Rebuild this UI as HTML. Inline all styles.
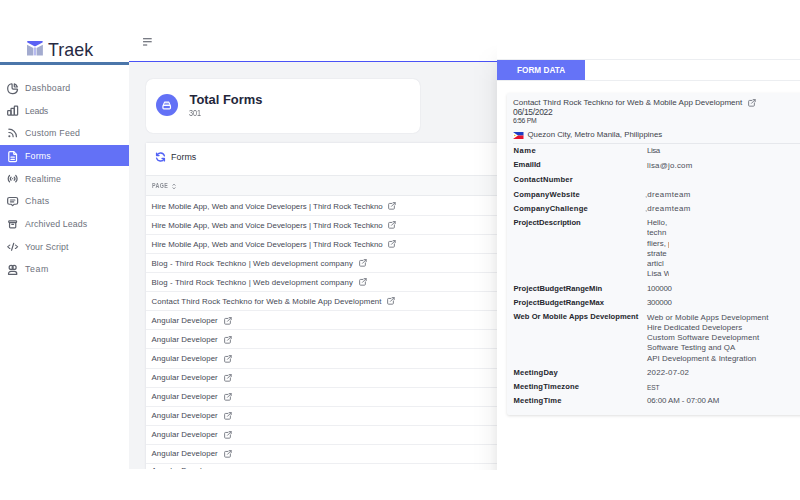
<!DOCTYPE html>
<html><head><meta charset="utf-8">
<style>
*{margin:0;padding:0;box-sizing:border-box}
html,body{width:800px;height:500px;overflow:hidden;background:#fff;font-family:"Liberation Sans",sans-serif}
.abs{position:absolute}
#side{position:absolute;left:0;top:0;width:130px;height:500px;background:#fff}
.logo-t{position:absolute;left:48px;top:38.8px;font-size:17.8px;line-height:22px;color:#272a43;letter-spacing:0}
.sline{position:absolute;left:0;top:62px;width:129px;height:2.6px;background:#4b76aa}
.nav{position:absolute;left:0;width:129px;height:16px;font-size:8.8px;line-height:16px;color:#6d717c}
.nav .t{position:absolute;left:25px;top:0;white-space:nowrap}
.nav .ic{position:absolute;left:6.1px;top:1.7px;width:13.3px;height:13.3px}
.nav .ic svg{display:block}
.actbg{position:absolute;left:0;top:145px;width:129px;height:21px;background:#6371f6}
.nav.act{color:#fff}
#hdr{position:absolute;left:130px;top:0;width:670px;height:61px;background:#fff}
.bline{position:absolute;left:129px;top:60.5px;width:370px;height:1.6px;background:#4a52f6}
#main{position:absolute;left:129px;top:62px;width:370px;height:407.4px;background:#f3f4f6;overflow:hidden}
.card1{position:absolute;left:16.5px;top:16.8px;width:274.5px;height:54.4px;background:#fff;border-radius:7px;box-shadow:0 0 1.5px rgba(40,50,80,.14)}
.circ{position:absolute;left:10.4px;top:15.6px;width:22px;height:22px;border-radius:50%;background:#6371f6}
.circ svg{position:absolute;left:6.4px;top:6.8px}
.tf{position:absolute;left:44px;top:13.2px;font-size:12.9px;line-height:16px;font-weight:bold;color:#23263a}
.n301{position:absolute;left:43.5px;top:29.2px;font-size:9.1px;line-height:10px;color:#6f727a;transform:scaleX(.8);transform-origin:0 0}
.card2{position:absolute;left:16.5px;top:81px;width:400px;height:340px;background:#fff;box-shadow:0 -.5px 2px rgba(40,50,80,.12)}
.c2h{position:absolute;left:0;top:0;width:100%;height:32px}
.c2h .t{position:absolute;left:25.5px;top:9.2px;font-size:8.9px;line-height:10px;color:#2b2f3a}
.c2h svg{position:absolute;left:9.5px;top:8.5px}
.th{position:absolute;left:0;top:32.25px;width:100%;height:21px;background:#f8f9fa;border-top:1px solid #e9ebee;border-bottom:1px solid #e9ebee}
.th .t{position:absolute;left:6.5px;top:5.3px;font-size:6.8px;line-height:8px;color:#8a8e95;font-weight:bold;letter-spacing:.45px;transform:scaleX(.78);transform-origin:0 0}
.th svg{position:absolute;left:26.5px;top:7px}
.row{position:absolute;left:0;width:100%;height:19px;border-bottom:1px solid #eeeff2}
.row .t{position:absolute;left:6px;top:4.5px;font-size:7.85px;line-height:10px;color:#454854;white-space:nowrap}
.row .ext{position:absolute;top:4.1px;width:11px;height:11px}
.row .ext svg{display:block}
#panel{position:absolute;left:497px;top:59px;width:303px;height:411px;background:#fff}
.tabbar{position:absolute;left:0;top:0;width:303px;height:22px;border-top:1px solid #eceef1;border-bottom:1px solid #eceef1}
.tab{position:absolute;left:0;top:-.5px;width:88.2px;height:20.6px;background:#6573f7;color:#fff;font-weight:bold;font-size:8.2px;text-align:center;line-height:22px}
.card3{position:absolute;left:10px;top:33.5px;width:300px;height:322.5px;background:#f8f9fb;box-shadow:0 1px 3px rgba(0,0,0,.13);border-radius:2px}
.c3t{position:absolute;left:6px;top:5.4px;font-size:8px;line-height:10px;color:#3c3f49;white-space:nowrap}
.c3d{position:absolute;left:6px;top:14.45px;font-size:8.5px;line-height:10px;color:#3c3f49}
.c3h{position:absolute;left:6px;top:24.7px;font-size:6.8px;line-height:7px;color:#3c3f49}
.flag{position:absolute;left:6.1px;top:39.25px}
.c3l{position:absolute;left:20.5px;top:37.7px;font-size:7.85px;line-height:10px;color:#3c3f49;white-space:nowrap}
.sep{position:absolute;left:6px;top:50.5px;width:300px;height:1px;background:#e6e8ec}
.lab{position:absolute;left:6.5px;font-size:7.6px;line-height:9px;font-weight:bold;color:#24262d;white-space:nowrap}
.val{position:absolute;left:140px;font-size:7.9px;line-height:10.3px;color:#4b4e58;white-space:nowrap}
.val.clip{width:21.5px;overflow:hidden}
.est{font-size:6.6px;letter-spacing:-.1px}

.pshadow{position:absolute;left:471px;top:44px;width:26px;height:426px;background:linear-gradient(90deg,rgba(0,0,0,0) 0%,rgba(0,0,0,.008) 40%,rgba(0,0,0,.028) 75%,rgba(0,0,0,.065) 100%);-webkit-mask-image:linear-gradient(180deg,transparent 0,rgba(0,0,0,.35) 16px,#000 40px)}

</style></head><body>
<div id="side">
  <svg class="abs" style="left:27px;top:41.3px" width="15.9" height="14.4" viewBox="0 0 15.9 14.4">
    <path d="M.9 0H15C15.8 0 16.1 .9 15.5 1.4L8.9 5.1Q7.95 5.6 7 5.1L.4 1.4C-.2.9.1 0 .9 0Z" fill="#5b61f4"/>
    <path d="M0 3.7L6.3 6.9V14.4H0Z" fill="#a3abcf"/>
    <path d="M15.9 3.7L9.6 6.9V14.4H15.9Z" fill="#a3abcf"/>
    <path d="M6.8 6.5H9.1V14.4H6.8Z" fill="#b7baf0"/>
  </svg>
  <div class="logo-t"><span id="logo" style="letter-spacing:0.059px">Traek</span></div>
  <div class="sline"></div>
  <div class="actbg"></div>
<div class="nav" style="top:80.0px"><span class="ic"><svg width="13.3" height="13.3" viewBox="0 0 24 24" fill="none" stroke="#5d616c" stroke-width="2.2" stroke-linecap="round" stroke-linejoin="round"><path d="M10 3.2a9 9 0 1 0 10.8 10.8a1 1 0 0 0 -1 -1h-6.8a2 2 0 0 1 -2 -2v-7a.9 .9 0 0 0 -1 -.8"/><path d="M15 3.5a9 9 0 0 1 5.5 5.5h-4.5a1 1 0 0 1 -1 -1v-4.5"/></svg></span><span class="t"><span id="n0" style="letter-spacing:0.277px">Dashboard</span></span></div>
<div class="nav" style="top:102.6px"><span class="ic"><svg width="13.3" height="13.3" viewBox="0 0 24 24" fill="none" stroke="#5d616c" stroke-width="2.2" stroke-linecap="round" stroke-linejoin="round"><path d="M3 13a1 1 0 0 1 1 -1h4a1 1 0 0 1 1 1v6a1 1 0 0 1 -1 1h-4a1 1 0 0 1 -1 -1z"/><path d="M9 9a1 1 0 0 1 1 -1h4a1 1 0 0 1 1 1v10a1 1 0 0 1 -1 1h-4a1 1 0 0 1 -1 -1z"/><path d="M15 5a1 1 0 0 1 1 -1h4a1 1 0 0 1 1 1v14a1 1 0 0 1 -1 1h-4a1 1 0 0 1 -1 -1z"/></svg></span><span class="t"><span id="n1" style="letter-spacing:-0.176px">Leads</span></span></div>
<div class="nav" style="top:125.3px"><span class="ic"><svg width="13.3" height="13.3" viewBox="0 0 24 24" fill="none" stroke="#5d616c" stroke-width="2.2" stroke-linecap="round" stroke-linejoin="round"><g transform="translate(12 10.8) scale(.85) translate(-12 -12)" stroke-width="2.6"><path d="M4 19a1 1 0 1 0 2 0a1 1 0 1 0 -2 0"/><path d="M4 4a16 16 0 0 1 16 16"/><path d="M4 11a9 9 0 0 1 9 9"/></g></svg></span><span class="t"><span id="n2" style="letter-spacing:0.220px">Custom Feed</span></span></div>
<div class="nav act" style="top:147.9px"><span class="ic"><svg width="13.3" height="13.3" viewBox="0 0 24 24" fill="none" stroke="#fff" stroke-width="2.2" stroke-linecap="round" stroke-linejoin="round"><path d="M14 3v4a1 1 0 0 0 1 1h4"/><path d="M17 21h-10a2 2 0 0 1 -2 -2v-14a2 2 0 0 1 2 -2h7l5 5v11a2 2 0 0 1 -2 2z"/><path d="M9 13l6 0"/><path d="M9 17l6 0"/></svg></span><span class="t"><span id="n3" style="letter-spacing:0.211px">Forms</span></span></div>
<div class="nav" style="top:170.6px"><span class="ic"><svg width="13.3" height="13.3" viewBox="0 0 24 24" fill="none" stroke="#5d616c" stroke-width="2.2" stroke-linecap="round" stroke-linejoin="round"><path d="M12 12l0 .01"/><path d="M14.828 9.172a4 4 0 0 1 0 5.656"/><path d="M17.657 6.343a8 8 0 0 1 0 11.314"/><path d="M9.168 14.828a4 4 0 0 1 0 -5.656"/><path d="M6.337 17.657a8 8 0 0 1 0 -11.314"/></svg></span><span class="t"><span id="n4" style="letter-spacing:0.185px">Realtime</span></span></div>
<div class="nav" style="top:193.2px"><span class="ic"><svg width="13.3" height="13.3" viewBox="0 0 24 24" fill="none" stroke="#5d616c" stroke-width="2.2" stroke-linecap="round" stroke-linejoin="round"><g transform="translate(0 1.2) scale(1 .86)"><path d="M8 9h8"/><path d="M8 13h6"/><path d="M9 18h-3a3 3 0 0 1 -3 -3v-8a3 3 0 0 1 3 -3h12a3 3 0 0 1 3 3v8a3 3 0 0 1 -3 3h-3l-3 3l-3 -3z"/></g></svg></span><span class="t"><span id="n5" style="letter-spacing:0.320px">Chats</span></span></div>
<div class="nav" style="top:215.9px"><span class="ic"><svg width="13.3" height="13.3" viewBox="0 0 24 24" fill="none" stroke="#5d616c" stroke-width="2.2" stroke-linecap="round" stroke-linejoin="round"><g transform="translate(12 11.5) scale(.8) translate(-12 -12)" stroke-width="2.7"><path d="M3 6a2 2 0 0 1 2 -2h14a2 2 0 0 1 2 2v0a2 2 0 0 1 -2 2h-14a2 2 0 0 1 -2 -2z"/><path d="M5 8v10a2 2 0 0 0 2 2h10a2 2 0 0 0 2 -2v-10"/><path d="M10 12l4 0"/></g></svg></span><span class="t"><span id="n6" style="letter-spacing:0.125px">Archived Leads</span></span></div>
<div class="nav" style="top:238.6px"><span class="ic"><svg width="13.3" height="13.3" viewBox="0 0 24 24" fill="none" stroke="#5d616c" stroke-width="2.2" stroke-linecap="round" stroke-linejoin="round"><g transform="translate(0 2.6) scale(1 .8)"><path d="M7 8l-4 4l4 4"/><path d="M17 8l4 4l-4 4"/><path d="M14 4l-4 16"/></g></svg></span><span class="t"><span id="n7" style="letter-spacing:0.080px">Your Script</span></span></div>
<div class="nav" style="top:261.2px"><span class="ic"><svg width="13.3" height="13.3" viewBox="0 0 24 24" fill="none" stroke="#5d616c" stroke-width="2.2" stroke-linecap="round" stroke-linejoin="round"><circle cx="9.3" cy="8" r="3.6"/><circle cx="14.7" cy="8" r="3.6"/><path d="M4.5 20.5v-.8a4.5 4.5 0 0 1 4.5 -4.5h6a4.5 4.5 0 0 1 4.5 4.5v.8z"/></svg></span><span class="t"><span id="n8" style="letter-spacing:0.583px">Team</span></span></div>
</div>
<div id="hdr">
  <svg class="abs" style="left:13px;top:38.2px" width="10" height="8" viewBox="0 0 10 8"><path d="M.45 .75H8.3M.45 3.75H8.3M.45 7H3.8" stroke="#2c2f3d" stroke-width="0.85" stroke-linecap="round"/></svg>
</div>
<div class="bline"></div>
<div id="main">
  <div class="card1"><div class="circ"><svg width="9.4" height="8.6" viewBox="0 0 10 9" fill="none" stroke="#fff" stroke-width="1.15" stroke-linejoin="round"><path d="M1.2 4.6L2.7 1.1H7.3L8.8 4.6" fill="rgba(255,255,255,.3)"/><rect x="1" y="4.6" width="8" height="3.8" rx=".9" stroke-width="1.3"/></svg></div><div class="tf"><span id="tf" style="letter-spacing:0.007px">Total Forms</span></div><div class="n301">301</div></div>
  <div class="card2">
    <div class="c2h"><svg width="11" height="10" viewBox="0 0 12 11" fill="none" stroke="#5162f5" stroke-width="1.5" stroke-linecap="round" stroke-linejoin="round"><path d="M10.3 4.3A4.5 4.5 0 0 0 2 3.5"/><path d="M1.7 1.2v2.6h2.6"/><path d="M1.7 6.7A4.5 4.5 0 0 0 10 7.5"/><path d="M10.3 9.8V7.2H7.7"/></svg><span class="t"><span id="fh" style="letter-spacing:0.028px">Forms</span></span></div>
    <div class="th"><span class="t">PAGE</span><svg width="4" height="7" viewBox="0 0 4 7" fill="none" stroke="#858991" stroke-width=".9"><path d="M.6 2.6L2 1.1 3.4 2.6M.6 4.4L2 5.9 3.4 4.4"/></svg></div>
<div class="row" style="top:54.0px"><span class="t"><span id="r0" style="letter-spacing:0.026px">Hire Mobile App, Web and Voice Developers | Third Rock Techkno</span></span><span class="ext" style="left:241.8px"><svg width="9.8" height="9.8" viewBox="0 0 24 24" fill="none" stroke="#7b7f87" stroke-width="2.4" stroke-linecap="round" stroke-linejoin="round"><path d="M12 6h-6a2 2 0 0 0 -2 2v10a2 2 0 0 0 2 2h10a2 2 0 0 0 2 -2v-6"/><path d="M11 13l9 -9"/><path d="M15 4h5v5"/></svg></span></div>
<div class="row" style="top:73.07px"><span class="t"><span id="r1" style="letter-spacing:0.026px">Hire Mobile App, Web and Voice Developers | Third Rock Techkno</span></span><span class="ext" style="left:241.8px"><svg width="9.8" height="9.8" viewBox="0 0 24 24" fill="none" stroke="#7b7f87" stroke-width="2.4" stroke-linecap="round" stroke-linejoin="round"><path d="M12 6h-6a2 2 0 0 0 -2 2v10a2 2 0 0 0 2 2h10a2 2 0 0 0 2 -2v-6"/><path d="M11 13l9 -9"/><path d="M15 4h5v5"/></svg></span></div>
<div class="row" style="top:92.14px"><span class="t"><span id="r2" style="letter-spacing:0.026px">Hire Mobile App, Web and Voice Developers | Third Rock Techkno</span></span><span class="ext" style="left:241.8px"><svg width="9.8" height="9.8" viewBox="0 0 24 24" fill="none" stroke="#7b7f87" stroke-width="2.4" stroke-linecap="round" stroke-linejoin="round"><path d="M12 6h-6a2 2 0 0 0 -2 2v10a2 2 0 0 0 2 2h10a2 2 0 0 0 2 -2v-6"/><path d="M11 13l9 -9"/><path d="M15 4h5v5"/></svg></span></div>
<div class="row" style="top:111.21000000000001px"><span class="t"><span id="r3" style="letter-spacing:0.126px">Blog - Third Rock Techkno | Web development company</span></span><span class="ext" style="left:212.2px"><svg width="9.8" height="9.8" viewBox="0 0 24 24" fill="none" stroke="#7b7f87" stroke-width="2.4" stroke-linecap="round" stroke-linejoin="round"><path d="M12 6h-6a2 2 0 0 0 -2 2v10a2 2 0 0 0 2 2h10a2 2 0 0 0 2 -2v-6"/><path d="M11 13l9 -9"/><path d="M15 4h5v5"/></svg></span></div>
<div class="row" style="top:130.28px"><span class="t"><span id="r4" style="letter-spacing:0.126px">Blog - Third Rock Techkno | Web development company</span></span><span class="ext" style="left:212.2px"><svg width="9.8" height="9.8" viewBox="0 0 24 24" fill="none" stroke="#7b7f87" stroke-width="2.4" stroke-linecap="round" stroke-linejoin="round"><path d="M12 6h-6a2 2 0 0 0 -2 2v10a2 2 0 0 0 2 2h10a2 2 0 0 0 2 -2v-6"/><path d="M11 13l9 -9"/><path d="M15 4h5v5"/></svg></span></div>
<div class="row" style="top:149.35px"><span class="t"><span id="r5" style="letter-spacing:0.094px">Contact Third Rock Techkno for Web &amp; Mobile App Development</span></span><span class="ext" style="left:240.5px"><svg width="9.8" height="9.8" viewBox="0 0 24 24" fill="none" stroke="#7b7f87" stroke-width="2.4" stroke-linecap="round" stroke-linejoin="round"><path d="M12 6h-6a2 2 0 0 0 -2 2v10a2 2 0 0 0 2 2h10a2 2 0 0 0 2 -2v-6"/><path d="M11 13l9 -9"/><path d="M15 4h5v5"/></svg></span></div>
<div class="row" style="top:168.42000000000002px"><span class="t"><span id="r6" style="letter-spacing:0.079px">Angular Developer</span></span><span class="ext" style="left:77.0px"><svg width="9.8" height="9.8" viewBox="0 0 24 24" fill="none" stroke="#7b7f87" stroke-width="2.4" stroke-linecap="round" stroke-linejoin="round"><path d="M12 6h-6a2 2 0 0 0 -2 2v10a2 2 0 0 0 2 2h10a2 2 0 0 0 2 -2v-6"/><path d="M11 13l9 -9"/><path d="M15 4h5v5"/></svg></span></div>
<div class="row" style="top:187.49px"><span class="t"><span id="r7" style="letter-spacing:0.079px">Angular Developer</span></span><span class="ext" style="left:77.0px"><svg width="9.8" height="9.8" viewBox="0 0 24 24" fill="none" stroke="#7b7f87" stroke-width="2.4" stroke-linecap="round" stroke-linejoin="round"><path d="M12 6h-6a2 2 0 0 0 -2 2v10a2 2 0 0 0 2 2h10a2 2 0 0 0 2 -2v-6"/><path d="M11 13l9 -9"/><path d="M15 4h5v5"/></svg></span></div>
<div class="row" style="top:206.56px"><span class="t"><span id="r8" style="letter-spacing:0.079px">Angular Developer</span></span><span class="ext" style="left:77.0px"><svg width="9.8" height="9.8" viewBox="0 0 24 24" fill="none" stroke="#7b7f87" stroke-width="2.4" stroke-linecap="round" stroke-linejoin="round"><path d="M12 6h-6a2 2 0 0 0 -2 2v10a2 2 0 0 0 2 2h10a2 2 0 0 0 2 -2v-6"/><path d="M11 13l9 -9"/><path d="M15 4h5v5"/></svg></span></div>
<div class="row" style="top:225.63px"><span class="t"><span id="r9" style="letter-spacing:0.079px">Angular Developer</span></span><span class="ext" style="left:77.0px"><svg width="9.8" height="9.8" viewBox="0 0 24 24" fill="none" stroke="#7b7f87" stroke-width="2.4" stroke-linecap="round" stroke-linejoin="round"><path d="M12 6h-6a2 2 0 0 0 -2 2v10a2 2 0 0 0 2 2h10a2 2 0 0 0 2 -2v-6"/><path d="M11 13l9 -9"/><path d="M15 4h5v5"/></svg></span></div>
<div class="row" style="top:244.7px"><span class="t"><span id="r10" style="letter-spacing:0.079px">Angular Developer</span></span><span class="ext" style="left:77.0px"><svg width="9.8" height="9.8" viewBox="0 0 24 24" fill="none" stroke="#7b7f87" stroke-width="2.4" stroke-linecap="round" stroke-linejoin="round"><path d="M12 6h-6a2 2 0 0 0 -2 2v10a2 2 0 0 0 2 2h10a2 2 0 0 0 2 -2v-6"/><path d="M11 13l9 -9"/><path d="M15 4h5v5"/></svg></span></div>
<div class="row" style="top:263.77px"><span class="t"><span id="r11" style="letter-spacing:0.079px">Angular Developer</span></span><span class="ext" style="left:77.0px"><svg width="9.8" height="9.8" viewBox="0 0 24 24" fill="none" stroke="#7b7f87" stroke-width="2.4" stroke-linecap="round" stroke-linejoin="round"><path d="M12 6h-6a2 2 0 0 0 -2 2v10a2 2 0 0 0 2 2h10a2 2 0 0 0 2 -2v-6"/><path d="M11 13l9 -9"/><path d="M15 4h5v5"/></svg></span></div>
<div class="row" style="top:282.84000000000003px"><span class="t"><span id="r12" style="letter-spacing:0.079px">Angular Developer</span></span><span class="ext" style="left:77.0px"><svg width="9.8" height="9.8" viewBox="0 0 24 24" fill="none" stroke="#7b7f87" stroke-width="2.4" stroke-linecap="round" stroke-linejoin="round"><path d="M12 6h-6a2 2 0 0 0 -2 2v10a2 2 0 0 0 2 2h10a2 2 0 0 0 2 -2v-6"/><path d="M11 13l9 -9"/><path d="M15 4h5v5"/></svg></span></div>
<div class="row" style="top:301.90999999999997px"><span class="t"><span id="r13" style="letter-spacing:0.079px">Angular Developer</span></span><span class="ext" style="left:77.0px"><svg width="9.8" height="9.8" viewBox="0 0 24 24" fill="none" stroke="#7b7f87" stroke-width="2.4" stroke-linecap="round" stroke-linejoin="round"><path d="M12 6h-6a2 2 0 0 0 -2 2v10a2 2 0 0 0 2 2h10a2 2 0 0 0 2 -2v-6"/><path d="M11 13l9 -9"/><path d="M15 4h5v5"/></svg></span></div>
<div class="row" style="top:320.98px"><span class="t" style="top:1.9px"><span id="r14" style="letter-spacing:0.079px">Angular Developer</span></span><span class="ext" style="left:77.0px"><svg width="9.8" height="9.8" viewBox="0 0 24 24" fill="none" stroke="#7b7f87" stroke-width="2.4" stroke-linecap="round" stroke-linejoin="round"><path d="M12 6h-6a2 2 0 0 0 -2 2v10a2 2 0 0 0 2 2h10a2 2 0 0 0 2 -2v-6"/><path d="M11 13l9 -9"/><path d="M15 4h5v5"/></svg></span></div>
<div class="row" style="top:340.05px"><span class="t"><span id="r15" style="letter-spacing:0.079px">Angular Developer</span></span><span class="ext" style="left:77.0px"><svg width="9.8" height="9.8" viewBox="0 0 24 24" fill="none" stroke="#7b7f87" stroke-width="2.4" stroke-linecap="round" stroke-linejoin="round"><path d="M12 6h-6a2 2 0 0 0 -2 2v10a2 2 0 0 0 2 2h10a2 2 0 0 0 2 -2v-6"/><path d="M11 13l9 -9"/><path d="M15 4h5v5"/></svg></span></div>
  </div>
</div>
<div class="pshadow"></div>
<div id="panel">
  <div class="tabbar"><div class="tab"><span id="tab" style="letter-spacing:0.042px">FORM DATA</span></div></div>
  <div class="card3">
    <div class="c3t"><span id="c3t" style="letter-spacing:0.004px">Contact Third Rock Techkno for Web &amp; Mobile App Development</span></div>
    <span class="abs" style="left:240px;top:5.6px;width:11px;height:11px;display:block;line-height:0"><svg width="9.8" height="9.8" viewBox="0 0 24 24" fill="none" stroke="#7b7f87" stroke-width="2.4" stroke-linecap="round" stroke-linejoin="round"><path d="M12 6h-6a2 2 0 0 0 -2 2v10a2 2 0 0 0 2 2h10a2 2 0 0 0 2 -2v-6"/><path d="M11 13l9 -9"/><path d="M15 4h5v5"/></svg></span>
    <div class="c3d"><span id="c3d" style="letter-spacing:-0.310px">06/15/2022</span></div>
    <div class="c3h"><span id="c3h" style="letter-spacing:-0.285px">6:56 PM</span></div>
    <svg class="flag" width="10.5" height="7" viewBox="0 0 21 14"><rect width="21" height="7" fill="#1d3fc4"/><rect y="7" width="21" height="7" fill="#e5152e"/><path d="M0 0L10 7L0 14Z" fill="#fff"/><circle cx="3.5" cy="7" r="1.6" fill="#f5c518"/></svg>
    <div class="c3l"><span id="c3l" style="letter-spacing:0.004px">Quezon City, Metro Manila, Philippines</span></div>
    <div class="sep"></div>
<div class="lab" style="top:53.37px"><span id="l0" style="letter-spacing:0.514px">Name</span></div>
<div class="val" style="top:53.50px"><span id="v0_0" style="letter-spacing:-0.416px">Lisa</span></div>
<div class="lab" style="top:67.87px"><span id="l1" style="letter-spacing:0.035px">EmailId</span></div>
<div class="val" style="top:68.00px"><span id="v1_0" style="letter-spacing:0.214px">lisa@jo.com</span></div>
<div class="lab" style="top:82.37px"><span id="l2" style="letter-spacing:0.188px">ContactNumber</span></div>
<div class="lab" style="top:97.12px"><span id="l3" style="letter-spacing:0.204px">CompanyWebsite</span></div>
<div class="val" style="top:97.25px"><span style="margin-left:-2px;opacity:.7">,</span><span id="v3_0" style="letter-spacing:0.414px">dreamteam</span></div>
<div class="lab" style="top:111.12px"><span id="l4" style="letter-spacing:0.222px">CompanyChallenge</span></div>
<div class="val" style="top:111.25px"><span style="margin-left:-2px;opacity:.7">,</span><span id="v4_0" style="letter-spacing:0.414px">dreamteam</span></div>
<div class="lab" style="top:125.37px"><span id="l5" style="letter-spacing:-0.018px">ProjectDescription</span></div>
<div class="val clip" style="top:125.50px"><span id="v5_0">Hello,</span><br><span id="v5_1">techn</span><br><span id="v5_2">fliers, p</span><br><span id="v5_3">strate</span><br><span id="v5_4">articl</span><br><span id="v5_5">Lisa W</span></div>
<div class="lab" style="top:191.12px"><span id="l6" style="letter-spacing:0.027px">ProjectBudgetRangeMin</span></div>
<div class="val" style="top:191.25px"><span id="v6_0" style="letter-spacing:-0.271px">100000</span></div>
<div class="lab" style="top:205.37px"><span id="l7" style="letter-spacing:0.029px">ProjectBudgetRangeMax</span></div>
<div class="val" style="top:205.50px"><span id="v7_0" style="letter-spacing:-0.271px">300000</span></div>
<div class="lab" style="top:219.87px"><span id="l8" style="letter-spacing:0.038px">Web Or Mobile Apps Development</span></div>
<div class="val" style="top:220.00px"><span id="v8_0" style="letter-spacing:0.080px">Web or Mobile Apps Development</span><br><span id="v8_1" style="letter-spacing:0.039px">Hire Dedicated Developers</span><br><span id="v8_2" style="letter-spacing:0.117px">Custom Software Development</span><br><span id="v8_3" style="letter-spacing:0.050px">Software Testing and QA</span><br><span id="v8_4" style="letter-spacing:0.032px">API Development &amp; Integration</span></div>
<div class="lab" style="top:275.37px"><span id="l9" style="letter-spacing:0.178px">MeetingDay</span></div>
<div class="val" style="top:275.50px"><span id="v9_0" style="letter-spacing:0.179px">2022-07-02</span></div>
<div class="lab" style="top:289.87px"><span id="l10" style="letter-spacing:0.136px">MeetingTimezone</span></div>
<div class="val" style="top:290.00px"><span id="v10_0"><span class="est">EST</span></span></div>
<div class="lab" style="top:303.62px"><span id="l11" style="letter-spacing:0.170px">MeetingTime</span></div>
<div class="val" style="top:303.75px"><span id="v11_0" style="letter-spacing:-0.081px">06:00 AM - 07:00 AM</span></div>
  </div>
</div>
</body></html>
